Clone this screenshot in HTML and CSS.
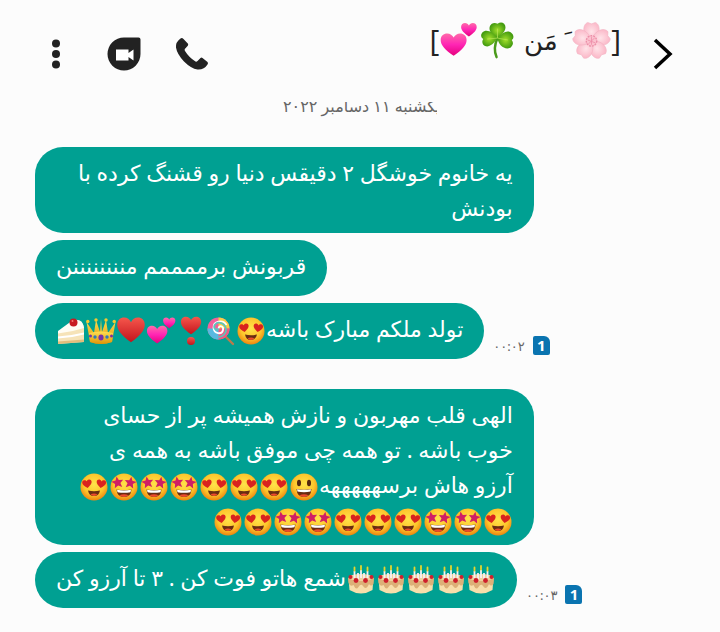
FILE: index.html
```html
<!DOCTYPE html>
<html lang="fa">
<head>
    <meta charset="UTF-8">
    <meta name="viewport" content="width=device-width, initial-scale=1.0">
    <title>Messages</title>
    <link rel="stylesheet" href="styles.css">
</head>
<body>

    <!-- Emoji symbols, reused below -->
    <svg class="symbols" aria-hidden="true">
        <defs>
            <radialGradient id="face" cx="50%" cy="40%" r="58%">
                <stop offset="0" stop-color="#ffe34a"/>
                <stop offset="0.65" stop-color="#fdc62c"/>
                <stop offset="1" stop-color="#ee8a12"/>
            </radialGradient>
            <linearGradient id="red" x1="0" y1="0" x2="0" y2="1">
                <stop offset="0" stop-color="#f5564b"/>
                <stop offset="1" stop-color="#c3141d"/>
            </linearGradient>
            <linearGradient id="pink" x1="0" y1="0" x2="0" y2="1">
                <stop offset="0" stop-color="#ff6aa9"/>
                <stop offset="0.5" stop-color="#ff25b4"/>
                <stop offset="1" stop-color="#e5007c"/>
            </linearGradient>
            <linearGradient id="gold" x1="0" y1="0" x2="0" y2="1">
                <stop offset="0" stop-color="#ffdf52"/>
                <stop offset="1" stop-color="#dd9408"/>
            </linearGradient>
            <radialGradient id="leaf">
                <stop offset="0" stop-color="#a3df2b"/>
                <stop offset="1" stop-color="#459c10"/>
            </radialGradient>
            <radialGradient id="petal">
                <stop offset="0" stop-color="#ffe3e8"/>
                <stop offset="1" stop-color="#fbbccb"/>
            </radialGradient>
            <path id="heart" d="M12 21C5 16 1 12 1 7.500C1 4 3.500 2 6.500 2C9 2 11 3.500 12 5.500C13 3.500 15 2 17.500 2C20.500 2 23 4 23 7.500C23 12 19 16 12 21Z"/>
            <path id="star" d="M12 1L15 8L23 9L17 14L19 22L12 18L5 22L7 14L1 9L9 8Z"/>
        </defs>

        <symbol id="heart-eyes" viewBox="0 0 30 30">
            <circle cx="15" cy="15" r="13.500" fill="url(#face)"/>
            <use href="#heart" fill="#d9231f" transform="translate(3 7) rotate(-8 5 5) scale(.43)"/>
            <use href="#heart" fill="#d9231f" transform="translate(17 7) rotate(8 5 5) scale(.43)"/>
            <path d="M9 18.500Q15 20 21 18.500Q20 24 15 24Q10 24 9 18.500Z" fill="#692c12"/>
            <path d="M11.500 22.300Q15 20.600 18.500 22.300Q17 24 15 24Q13 24 11.500 22.300Z" fill="#ec4a2c"/>
        </symbol>

        <symbol id="star-eyes" viewBox="0 0 30 30">
            <circle cx="15" cy="15" r="13.500" fill="url(#face)"/>
            <use href="#star" fill="#d01f65" transform="translate(2 4) rotate(-10 6 6) scale(.54)"/>
            <use href="#star" fill="#d01f65" transform="translate(15 4) rotate(10 6 6) scale(.54)"/>
            <path d="M7.500 17.500Q15 19 22.500 17.500Q22 25 15 25Q8 25 7.500 17.500Z" fill="#692c12"/>
            <path d="M8 17.800Q15 19 22 17.800L21.500 20.200Q15 21.300 8.500 20.200Z" fill="#fff"/>
            <path d="M10.500 23.300Q15 21.300 19.500 23.300Q18 25 15 25Q12 25 10.500 23.300Z" fill="#ec4a2c"/>
        </symbol>

        <symbol id="grin" viewBox="0 0 30 30">
            <circle cx="15" cy="15" r="13.500" fill="url(#face)"/>
            <ellipse cx="10" cy="11" rx="2" ry="3.200" fill="#54270f"/>
            <ellipse cx="20" cy="11" rx="2" ry="3.200" fill="#54270f"/>
            <path d="M7.500 17Q15 18.500 22.500 17Q22 25 15 25Q8 25 7.500 17Z" fill="#692c12"/>
            <path d="M8 17.200Q15 18.500 22 17.200L21.500 19.600Q15 20.700 8.500 19.600Z" fill="#fff"/>
            <path d="M10.500 23.300Q15 21 19.500 23.300Q18 25 15 25Q12 25 10.500 23.300Z" fill="#ec4a2c"/>
        </symbol>

        <symbol id="lollipop" viewBox="0 0 30 30">
            <path d="M18 19L27 28" stroke="#b87b4c" stroke-width="2.400" stroke-linecap="round"/>
            <circle cx="12.500" cy="12.500" r="11" fill="#f3609b"/>
            <path d="M12.500 1.500A11 11 0 0 1 23.500 12.500L12.500 12.500Z" fill="#f9cf45"/>
            <path d="M23.500 12.500A11 11 0 0 1 12.500 23.500L12.500 12.500Z" fill="#ef5a83"/>
            <path d="M1.500 12.500A11 11 0 0 0 12.500 23.500L12.500 12.500Z" fill="#58b9e0"/>
            <path d="M12.500 12.500C13 8.500 18 10 17 14C16 19 8 18 7.500 12C7 5 17 3 20.500 9" fill="none" stroke="#fff" stroke-width="1.800"/>
            <path d="M12.500 12.500C11 16 6.500 12 9 8.500C12 5 19 7 20 13C20.500 17 17 21 12.500 21" fill="none" stroke="#5dc5bb" stroke-width="1.800"/>
        </symbol>

        <symbol id="heart-mark" viewBox="0 0 30 30">
            <use href="#heart" fill="url(#red)" transform="translate(4 -1) scale(.92)"/>
            <circle cx="15" cy="25" r="4" fill="url(#red)"/>
        </symbol>

        <symbol id="two-hearts" viewBox="0 0 30 30">
            <use href="#heart" fill="url(#pink)" transform="translate(0 8) scale(.93)"/>
            <use href="#heart" fill="url(#pink)" transform="translate(16.500 .5) scale(.56)"/>
        </symbol>

        <symbol id="red-heart" viewBox="0 0 30 30">
            <use href="#heart" fill="url(#red)" transform="translate(0 -1) scale(1.250 1.300)"/>
        </symbol>

        <symbol id="crown" viewBox="0 0 30 30">
            <path d="M4 26L.5 6L8 17L10 4L14 16L15 3L16 16L20 4L22 17L29.500 6L26 26Q15 30 4 26Z" fill="url(#gold)"/>
            <path d="M3 17Q15 14 27 17L26 26Q15 30 4 26Z" fill="url(#gold)"/>
            <circle cx="1.800" cy="5.500" r="1.700" fill="#f7c92e"/>
            <circle cx="10" cy="4" r="1.700" fill="#f7c92e"/>
            <circle cx="20" cy="4" r="1.700" fill="#f7c92e"/>
            <circle cx="28.200" cy="5.500" r="1.700" fill="#f7c92e"/>
            <ellipse cx="15" cy="21.500" rx="2.600" ry="3" fill="#7a30a5"/>
            <circle cx="9" cy="21" r="1.700" fill="#2d79bd"/>
            <circle cx="21" cy="21" r="1.700" fill="#2d79bd"/>
            <circle cx="4.500" cy="20" r="1.500" fill="#7a30a5"/>
            <circle cx="25.500" cy="20" r="1.500" fill="#7a30a5"/>
        </symbol>

        <symbol id="cake-slice" viewBox="0 0 30 30">
            <path d="M2 16L18 4Q27 4 28 12L28 26L2 28Z" fill="#f6e3b8"/>
            <path d="M2 15L17 4Q27 2 28 12Q16 16 2 17.500Z" fill="#fffdf5"/>
            <path d="M2 20.500Q16 19.500 28 16.500L28 18.500Q15 22 2 22.500Z" fill="#fff"/>
            <path d="M2 25.500L28 23.500L28 26L2 28Z" fill="#e3bd7c"/>
            <circle cx="17.500" cy="6.500" r="4" fill="#c81b22"/>
            <circle cx="16.500" cy="5" r="1" fill="#f4796f"/>
        </symbol>

        <symbol id="birthday-cake" viewBox="0 0 30 30">
            <path d="M2.500 13Q15 7 27.500 13L26.500 25Q15 32 3.500 25Z" fill="#f8deaa"/>
            <path d="M2 13Q15 6 28 13L27.500 19Q25 22 23 19Q20 26 17 21Q15 18 12.500 22Q10 26 7.500 20Q4 22 2.500 18Z" fill="#dcb078"/>
            <ellipse cx="15" cy="12.500" rx="12" ry="3.500" fill="#efd19e"/>
            <path d="M8.500 6V13M15 5V13M21.500 6V13M12 8V14M18 8V14" stroke="#f4f0f2" stroke-width="1.800"/>
            <path d="M8.500 2.500V5.500M15 1V4.500M21.500 2.500V5.500" stroke="#e7d52c" stroke-width="1.800" stroke-linecap="round"/>
            <g fill="#cf1f2c">
                <circle cx="4.500" cy="12" r="2"/>
                <circle cx="10" cy="15.500" r="2.400"/>
                <circle cx="19.500" cy="15.500" r="2.400"/>
                <circle cx="25.500" cy="12" r="2"/>
            </g>
        </symbol>

        <symbol id="blossom" viewBox="0 0 40 40">
            <g fill="url(#petal)" stroke="#f3b2c2" stroke-width=".6">
                <path id="petal-shape" d="M20 21C10 15 10 4 16 1.500L20 3L24 1.500C30 4 30 15 20 21Z"/>
                <use href="#petal-shape" transform="rotate(72 20 21)"/>
                <use href="#petal-shape" transform="rotate(144 20 21)"/>
                <use href="#petal-shape" transform="rotate(216 20 21)"/>
                <use href="#petal-shape" transform="rotate(288 20 21)"/>
            </g>
            <circle cx="20" cy="21" r="5.500" fill="#fbc1ce" stroke="#ec8fa8" stroke-width="1.400" stroke-dasharray="2 1"/>
            <path d="M20 17V25M16 20L24 23M17 24L23 18" stroke="#ef8faa" stroke-width=".9"/>
        </symbol>

        <symbol id="shamrock" viewBox="0 0 40 40">
            <path d="M20 18Q15 29 19 38" fill="none" stroke="#4b9a1c" stroke-width="2.600" stroke-linecap="round"/>
            <g fill="url(#leaf)">
                <path d="M20 18C12 14 9 7 14 3Q17 1 20 3Q24 0 27 3C31 8 26 14 20 18Z"/>
                <path d="M20 18C15 26 9 29 5 25Q3 22 5 19Q1 16 4 12C8 8 15 11 20 18Z"/>
                <path d="M20 18C26 10 33 9 36 14Q38 18 35 20Q38 24 34 28C28 31 21 26 20 18Z"/>
            </g>
            <path d="M20 18L20 8M20 18L9 19M20 18L31 20" stroke="#bbe85b" stroke-width=".7"/>
        </symbol>
    </svg>

    <!-- Top bar -->
    <header class="top-bar">
        <div class="actions">
            <button class="icon-button" aria-label="گزینه‌ها">
                <svg width="34" height="34" viewBox="0 0 34 34" fill="#222">
                    <circle cx="17" cy="6.500" r="4"/>
                    <circle cx="17" cy="17" r="4"/>
                    <circle cx="17" cy="27.500" r="4"/>
                </svg>
            </button>
            <button class="icon-button" aria-label="تماس تصویری">
                <svg width="34" height="34" viewBox="0 0 34 34">
                    <path d="M17 .5H31.500Q33.500 .5 33.500 2.500V17A16.500 16.500 0 1 1 17 .5Z" fill="#222"/>
                    <path d="M9 12.500H21.500V16L26.500 12.500V23.500L21.500 20V23.500H9Z" fill="#fff"/>
                </svg>
            </button>
            <button class="icon-button" aria-label="تماس">
                <svg width="34" height="34" viewBox="0 0 34 34">
                    <path d="M5.500 1.500Q7 .5 8.500 2L13 6.800Q13.500 7.800 12.800 8.800L9.800 12Q9.300 13 10 14Q14 20.500 20.500 24.500Q21.500 25 22.500 24L25.500 21Q26.500 20.200 27.500 21L32.500 25Q33.500 26.200 32.500 27.500Q29 33 22.500 32.500Q16 31.500 9 24.500Q2 17 1 10.500Q.5 5 5.500 1.500Z" fill="#222"/>
                </svg>
            </button>
        </div>
        <h1 class="contact" dir="rtl"><span class="bracket">[</span><svg class="emoji-large" role="img" aria-label="شکوفه"><use href="#blossom"/></svg> َ مَن <svg class="emoji-large" role="img" aria-label="شبدر"><use href="#shamrock"/></svg><svg class="emoji-large" role="img" aria-label="دو قلب"><use href="#two-hearts"/></svg><span class="bracket">]</span></h1>
        <button class="icon-button" aria-label="بازگشت">
            <svg width="20" height="32" viewBox="0 0 20 32" fill="none" stroke="#000" stroke-width="3.500">
                <path d="M2 2L17 16L2 30"/>
            </svg>
        </button>
    </header>

    <!-- Conversation -->
    <main>
        <div class="date" dir="rtl"><span>یکشنبه ۱۱ دسامبر ۲۰۲۲</span></div>

        <section class="group">
            <div class="row">
                <p class="bubble" dir="rtl">یه خانوم خوشگل ۲ دقیقس دنیا رو قشنگ کرده با بودنش</p>
            </div>
            <div class="row">
                <p class="bubble" dir="rtl">قربونش برممممم مننننننننن</p>
            </div>
            <div class="row">
                <p class="bubble" dir="rtl">تولد ملکم مبارک باشه<svg class="emoji"><use href="#heart-eyes"/></svg><svg class="emoji"><use href="#lollipop"/></svg><svg class="emoji"><use href="#heart-mark"/></svg><svg class="emoji"><use href="#two-hearts"/></svg><svg class="emoji"><use href="#red-heart"/></svg><svg class="emoji"><use href="#crown"/></svg><svg class="emoji"><use href="#cake-slice"/></svg></p>
                <div class="meta"><time datetime="00:02">۰۰:۰۲</time><span class="sim">1</span></div>
            </div>
        </section>

        <section class="group">
            <div class="row">
                <p class="bubble" dir="rtl">الهی قلب مهربون و نازش همیشه پر از حسای خوب باشه . تو همه چی موفق باشه به همه ی<br>آرزو هاش برسهههههه<svg class="emoji"><use href="#grin"/></svg><svg class="emoji"><use href="#heart-eyes"/></svg><svg class="emoji"><use href="#heart-eyes"/></svg><svg class="emoji"><use href="#heart-eyes"/></svg><svg class="emoji"><use href="#star-eyes"/></svg><svg class="emoji"><use href="#star-eyes"/></svg><svg class="emoji"><use href="#star-eyes"/></svg><svg class="emoji"><use href="#heart-eyes"/></svg><svg class="emoji"><use href="#heart-eyes"/></svg><svg class="emoji"><use href="#star-eyes"/></svg><svg class="emoji"><use href="#star-eyes"/></svg><svg class="emoji"><use href="#heart-eyes"/></svg><svg class="emoji"><use href="#heart-eyes"/></svg><svg class="emoji"><use href="#heart-eyes"/></svg><svg class="emoji"><use href="#star-eyes"/></svg><svg class="emoji"><use href="#star-eyes"/></svg><svg class="emoji"><use href="#heart-eyes"/></svg><svg class="emoji"><use href="#heart-eyes"/></svg></p>
            </div>
            <div class="row">
                <p class="bubble" dir="rtl"><svg class="emoji"><use href="#birthday-cake"/></svg><svg class="emoji"><use href="#birthday-cake"/></svg><svg class="emoji"><use href="#birthday-cake"/></svg><svg class="emoji"><use href="#birthday-cake"/></svg><svg class="emoji"><use href="#birthday-cake"/></svg>شمع هاتو فوت کن . ۳ تا آرزو کن</p>
                <div class="meta"><time datetime="00:03">۰۰:۰۳</time><span class="sim">1</span></div>
            </div>
        </section>
    </main>

</body>
</html>
```
FILE: styles.css
```css
/* General Styling */
* {
    box-sizing: border-box;
}

body {
    margin: 0;
    font-family: "Noto Sans", "DejaVu Sans", sans-serif;
    background: #fcfcfc;
    color: #222;
}

.symbols {
    position: absolute;
    width: 0;
    height: 0;
}

/* Top Bar */
.top-bar {
    display: flex;
    align-items: center;
    justify-content: space-between;
    height: 102px;
    padding: 6px 47px 0 39px;
}

.actions {
    display: flex;
    gap: 34px;
}

.icon-button {
    display: flex;
    padding: 0;
    border: none;
    background: none;
    cursor: pointer;
}

.contact {
    display: flex;
    align-items: center;
    margin: 0 32px 28px auto;
    font-size: 26px;
    font-weight: normal;
    line-height: 40px;
    white-space: pre;
}

.bracket {
    font-family: "Open Sans", sans-serif;
    font-size: 30px;
}

.emoji-large {
    width: 39px;
    height: 38px;
}

/* Date, half hidden under the top bar */
.date {
    display: flex;
    justify-content: flex-end;
    width: 154px;
    height: 15px;
    margin: 0 auto;
    overflow: hidden;
    font-size: 16px;
    line-height: 8px;
    color: #666;
    white-space: nowrap;
}

/* Messages */
.group {
    display: flex;
    flex-direction: column;
    gap: 7px;
    margin-top: 30px;
    padding: 0 20px 0 35px;
}

.row {
    display: flex;
    align-items: flex-end;
    gap: 9px;
}

.bubble {
    max-width: 75%;
    min-height: 56px;
    margin: 0;
    padding: 8px 21px;
    border-radius: 28px;
    background: #00a092;
    color: #fff;
    font-size: 22px;
    line-height: 35px;
}

.row .bubble:only-child {
    flex-shrink: 0;
}

.emoji {
    width: 30px;
    height: 30px;
    vertical-align: middle;
}

.meta {
    display: flex;
    align-items: center;
    gap: 8px;
    padding-bottom: 4px;
}

.meta time {
    font-size: 13px;
    color: #666;
}

.sim {
    width: 17px;
    height: 19px;
    border-radius: 2px 6px 2px 2px;
    background: #0a74b0;
    color: #fff;
    font-size: 15px;
    font-weight: bold;
    line-height: 19px;
    text-align: center;
}
```
